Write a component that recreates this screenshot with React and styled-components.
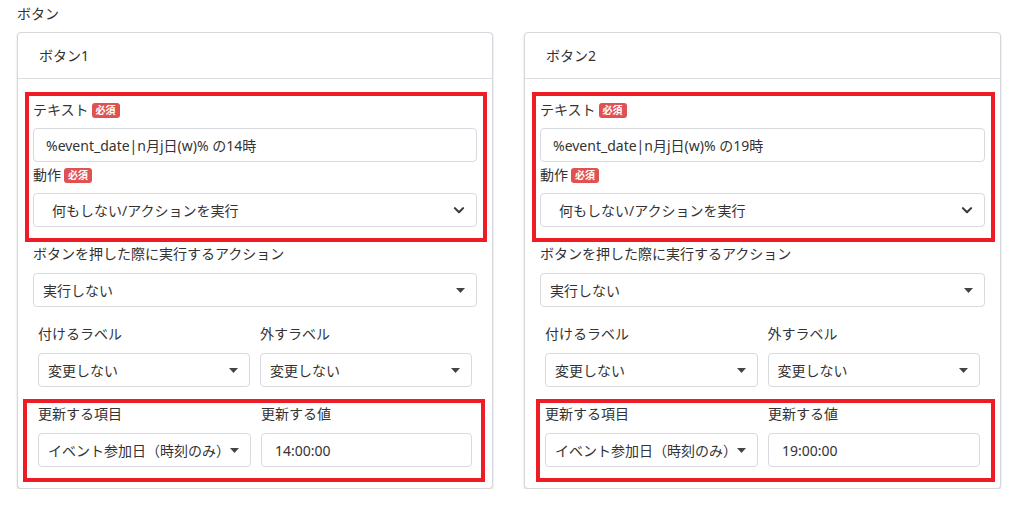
import React from 'react';
import styled, { createGlobalStyle } from 'styled-components';

const GlobalStyle = createGlobalStyle`
  body {
    margin: 0;
    background: #fff;
    font-family: "Noto Sans", "Noto Sans CJK JP", sans-serif;
    font-size: 14px;
    color: #333;
  }
`;

const buttons = [
  { name: 'ボタン1', text: '%event_date|n月j日(w)% の14時', value: '14:00:00', bottomBox: { l: -10, r: -8 } },
  { name: 'ボタン2', text: '%event_date|n月j日(w)% の19時', value: '19:00:00', bottomBox: { l: -4, r: -10 } },
];

const Chevron = () => (
  <svg width="12" height="12" viewBox="0 0 16 16">
    <path d="M2.5 5.5 8 11l5.5-5.5" fill="none" stroke="#343a40" strokeWidth="2.8" strokeLinecap="round" strokeLinejoin="round" />
  </svg>
);

const Caret = () => (
  <svg width="9" height="5" viewBox="0 0 9 5">
    <polygon points="0,0 9,0 4.5,5" fill="#444" />
  </svg>
);

const ButtonCard = ({ item }) => (
  <Card>
    <CardHeader>{item.name}</CardHeader>
    <CardBody>
      <Highlight $l={-8} $r={-10} $pt={4}>
        <Label>
          テキスト<Badge>必須</Badge>
        </Label>
        <TextBox>{item.text}</TextBox>
        <Label $top={3}>
          動作<Badge>必須</Badge>
        </Label>
        <SelectBox $pad={18}>
          <span>何もしない/アクションを実行</span>
          <Chevron />
        </SelectBox>
      </Highlight>

      <Label $top={2} $bottom={9}>ボタンを押した際に実行するアクション</Label>
      <SelectBox $pad={9}>
        <span>実行しない</span>
        <Caret />
      </SelectBox>

      <Row $top={17}>
        <Col>
          <Label $bottom={9}>付けるラベル</Label>
          <SelectBox $pad={9}>
            <span>変更しない</span>
            <Caret />
          </SelectBox>
        </Col>
        <Col>
          <Label $bottom={9}>外すラベル</Label>
          <SelectBox $pad={9}>
            <span>変更しない</span>
            <Caret />
          </SelectBox>
        </Col>
      </Row>

      <Highlight $l={item.bottomBox.l} $r={item.bottomBox.r} $top={12} $pt={1}>
        <Row>
          <Col>
            <Label $bottom={9}>更新する項目</Label>
            <SelectBox $pad={9}>
              <span>イベント参加日（時刻のみ）</span>
              <Caret />
            </SelectBox>
          </Col>
          <Col>
            <Label $bottom={9}>更新する値</Label>
            <TextBox $pad={13}>{item.value}</TextBox>
          </Col>
        </Row>
      </Highlight>
    </CardBody>
  </Card>
);

const App = () => (
  <>
    <GlobalStyle />
    <Page>
      <Title>ボタン</Title>
      <Cards>
        {buttons.map((b) => (
          <ButtonCard key={b.name} item={b} />
        ))}
      </Cards>
    </Page>
  </>
);

const Page = styled.div`
  padding: 4px 16px 0 17px;
`;

const Title = styled.div`
  line-height: 20px;
  margin-bottom: 8px;
`;

const Cards = styled.div`
  display: grid;
  grid-template-columns: 476px 477px;
  column-gap: 31px;
  align-items: start;
`;

const Card = styled.div`
  border: 1px solid #d6d6dd;
  border-radius: 4px;
  background: #fff;
  box-shadow: 0 1px 2px rgba(0, 0, 0, 0.18);
`;

const CardHeader = styled.div`
  height: 45px;
  line-height: 46px;
  padding: 0 21px;
  border-bottom: 1px solid #dcdce2;
`;

const CardBody = styled.div`
  padding: 13px 15px 6px 15px;
`;

const Highlight = styled.div`
  border: 4px solid #ee1c25;
  margin: ${(p) => p.$top || 0}px ${(p) => p.$r}px 0 ${(p) => p.$l}px;
  padding: ${(p) => p.$pt}px ${(p) => Math.max(0, -p.$r - 4)}px 11px
    ${(p) => Math.max(0, -p.$l - 4)}px;
`;

const Label = styled.div`
  display: flex;
  align-items: center;
  line-height: 20px;
  margin-top: ${(p) => p.$top || 0}px;
  margin-bottom: ${(p) => (p.$bottom === undefined ? 8 : p.$bottom)}px;
`;

const Badge = styled.span`
  display: inline-block;
  margin-left: 3px;
  padding: 0 4px;
  height: 15px;
  line-height: 15px;
  border-radius: 3px;
  background: #e05252;
  color: #fff;
  font-size: 10px;
  font-weight: 700;
`;

const FieldBase = styled.div`
  box-sizing: border-box;
  height: 34px;
  border: 1px solid #d9d9e0;
  border-radius: 4px;
  background: #fff;
  display: flex;
  align-items: center;
  color: #333;
  white-space: nowrap;
`;

const TextBox = styled(FieldBase)`
  padding-left: ${(p) => p.$pad || 12}px;
`;

const SelectBox = styled(FieldBase)`
  justify-content: space-between;
  padding: 0 11px 0 ${(p) => p.$pad}px;
  span {
    overflow: hidden;
  }
  svg {
    flex-shrink: 0;
  }
`;

const Row = styled.div`
  display: grid;
  grid-template-columns: 1fr 1fr;
  margin-top: ${(p) => p.$top || 0}px;
`;

const Col = styled.div`
  padding: 0 5px;
`;

export default App;
